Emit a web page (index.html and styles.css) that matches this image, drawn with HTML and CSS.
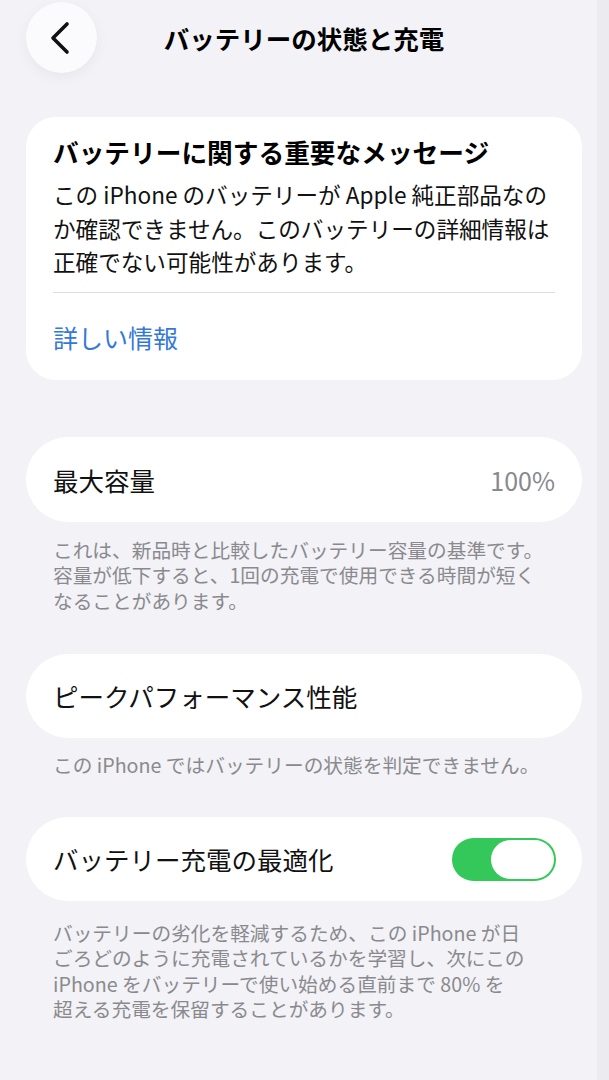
FILE: index.html
```html
<!DOCTYPE html>
<html lang="ja">
<head>
<meta charset="utf-8">
<title>バッテリーの状態と充電</title>
<link rel="stylesheet" href="styles.css">
</head>
<body>
<div class="page">
  <header class="nav">
    <button class="back" aria-label="戻る">
      <svg width="24" height="34" viewBox="0 0 24 34"><path d="M19 3 L5 17 L19 31" fill="none" stroke="#111" stroke-width="3.6" stroke-linecap="round" stroke-linejoin="round"/></svg>
    </button>
    <h1 class="nav-title">バッテリーの状態と充電</h1>
    <span></span>
  </header>

  <section class="card card-message">
    <h2 class="msg-title">バッテリーに関する重要なメッセージ</h2>
    <p class="msg-body">この iPhone のバッテリーが Apple 純正部品なの<br>か確認できません。このバッテリーの詳細情報は<br>正確でない可能性があります。</p>
    <div class="divider"></div>
    <a class="link">詳しい情報</a>
  </section>

  <section class="card row row-first">
    <span class="row-label">最大容量</span>
    <span class="row-value">100%</span>
  </section>
  <p class="footnote">これは、新品時と比較したバッテリー容量の基準です。<br>容量が低下すると、1回の充電で使用できる時間が短く<br>なることがあります。</p>

  <section class="card row">
    <span class="row-label">ピークパフォーマンス性能</span>
  </section>
  <p class="footnote">この iPhone ではバッテリーの状態を判定できません。</p>

  <section class="card row row-last">
    <span class="row-label">バッテリー充電の最適化</span>
    <span class="toggle"><span class="knob"></span></span>
  </section>
  <p class="footnote footnote-last">バッテリーの劣化を軽減するため、この iPhone が日<br>ごろどのように充電されているかを学習し、次にこの<br>iPhone をバッテリーで使い始める直前まで 80% を<br>超える充電を保留することがあります。</p>
</div>
</body>
</html>
```
FILE: styles.css
```css
html {
  background: linear-gradient(to right, #f2f2f7 0, #f2f2f7 597px, #ebebf0 597px);
  min-height: 100%;
}
body {
  margin: 0;
  font-family: "Noto Sans CJK JP", "Noto Sans", sans-serif;
  color: #000;
}
.page {
  padding: 2px 27px 0 26px;
}
.nav {
  display: grid;
  grid-template-columns: 71px 1fr 71px;
  align-items: center;
  height: 71px;
}
.back {
  width: 71px;
  height: 71px;
  border-radius: 50%;
  border: none;
  background: #fbfbfd;
  box-shadow: 0 4px 14px rgba(0,0,0,0.05);
  display: flex;
  align-items: center;
  justify-content: center;
  padding: 0 4px 0 0;
}
.nav-title {
  margin: 0;
  text-align: center;
  font-size: 25.5px;
  font-weight: 700;
  line-height: 34px;
}
.card {
  background: #fff;
  border-radius: 30px;
}
.card-message {
  margin-top: 44px;
  padding: 18px 27px 26px;
}
.msg-title {
  margin: 0;
  font-size: 25.7px;
  font-weight: 700;
  line-height: 34px;
}
.msg-body {
  margin: 9px 0 0;
  font-size: 22.6px;
  line-height: 33.5px;
  white-space: nowrap;
  color: #111;
}
.divider {
  margin-top: 13px;
  height: 1px;
  background: #dedee2;
}
.link {
  display: block;
  margin-top: 27px;
  font-size: 25px;
  line-height: 34px;
  color: #3479d8;
}
.row {
  height: 84px;
  border-radius: 42px;
  margin-top: 40.5px;
  padding: 0 27px;
  display: flex;
  align-items: center;
  justify-content: space-between;
}
.row-first {
  margin-top: 57.5px;
  height: 85px;
}
.row-last {
  margin-top: 39.5px;
}
.row-label {
  font-size: 25.5px;
  line-height: 34px;
  color: #111;
}
.row-value {
  font-size: 25px;
  color: #88888d;
  line-height: 34px;
}
.footnote {
  margin: 14.5px 0 0;
  padding-left: 27px;
  font-size: 19.7px;
  line-height: 25.5px;
  color: #8a8a8e;
  white-space: nowrap;
}
.footnote-last {
  margin-top: 18.5px;
}
.toggle {
  width: 104px;
  height: 43px;
  border-radius: 22px;
  background: #34c759;
  display: flex;
  align-items: center;
  justify-content: flex-end;
  padding: 0 2px;
  box-sizing: border-box;
  margin-right: -1px;
}
.knob {
  width: 63px;
  height: 39px;
  border-radius: 20px;
  background: #fff;
}
```
